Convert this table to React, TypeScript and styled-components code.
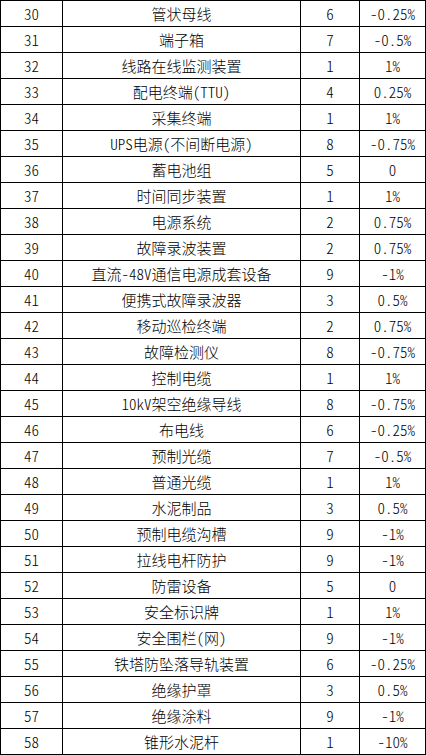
import React from 'react';
import styled, { createGlobalStyle } from 'styled-components';

const GlobalStyle = createGlobalStyle`
  html, body {
    margin: 0;
    padding: 0;
    background: #ffffff;
  }
  body {
    font-family: "Noto Sans CJK SC", "Liberation Sans", sans-serif;
    color: #000000;
  }
`;

const Table = styled.div`
  display: grid;
  grid-template-columns: 62px 238px 59px 66px;
  grid-auto-rows: 26px;
  width: 426px;
  border-top: 1px solid #000;
  border-left: 1px solid #000;
  box-sizing: border-box;
`;

// hwid: half-width latin from the CJK face, close to the SimSun look
const Cell = styled.div`
  display: flex;
  align-items: center;
  justify-content: center;
  border-right: 1px solid #000;
  border-bottom: 1px solid #000;
  font-size: 15px;
  font-weight: 300;
  font-feature-settings: "hwid" 1;
  line-height: 1;
  white-space: nowrap;
  overflow: hidden;
`;

type Row = [number, string, number, string];

const rows: Row[] = [
  [30, '管状母线', 6, '-0.25%'],
  [31, '端子箱', 7, '-0.5%'],
  [32, '线路在线监测装置', 1, '1%'],
  [33, '配电终端(TTU)', 4, '0.25%'],
  [34, '采集终端', 1, '1%'],
  [35, 'UPS电源(不间断电源)', 8, '-0.75%'],
  [36, '蓄电池组', 5, '0'],
  [37, '时间同步装置', 1, '1%'],
  [38, '电源系统', 2, '0.75%'],
  [39, '故障录波装置', 2, '0.75%'],
  [40, '直流-48V通信电源成套设备', 9, '-1%'],
  [41, '便携式故障录波器', 3, '0.5%'],
  [42, '移动巡检终端', 2, '0.75%'],
  [43, '故障检测仪', 8, '-0.75%'],
  [44, '控制电缆', 1, '1%'],
  [45, '10kV架空绝缘导线', 8, '-0.75%'],
  [46, '布电线', 6, '-0.25%'],
  [47, '预制光缆', 7, '-0.5%'],
  [48, '普通光缆', 1, '1%'],
  [49, '水泥制品', 3, '0.5%'],
  [50, '预制电缆沟槽', 9, '-1%'],
  [51, '拉线电杆防护', 9, '-1%'],
  [52, '防雷设备', 5, '0'],
  [53, '安全标识牌', 1, '1%'],
  [54, '安全围栏(网)', 9, '-1%'],
  [55, '铁塔防坠落导轨装置', 6, '-0.25%'],
  [56, '绝缘护罩', 3, '0.5%'],
  [57, '绝缘涂料', 9, '-1%'],
  [58, '锥形水泥杆', 1, '-10%'],
];

export default function App() {
  return (
    <>
      <GlobalStyle />
      <Table>
        {rows.map(([no, name, count, pct]) => (
          <React.Fragment key={no}>
            <Cell>{no}</Cell>
            <Cell>{name}</Cell>
            <Cell>{count}</Cell>
            <Cell>{pct}</Cell>
          </React.Fragment>
        ))}
      </Table>
    </>
  );
}
